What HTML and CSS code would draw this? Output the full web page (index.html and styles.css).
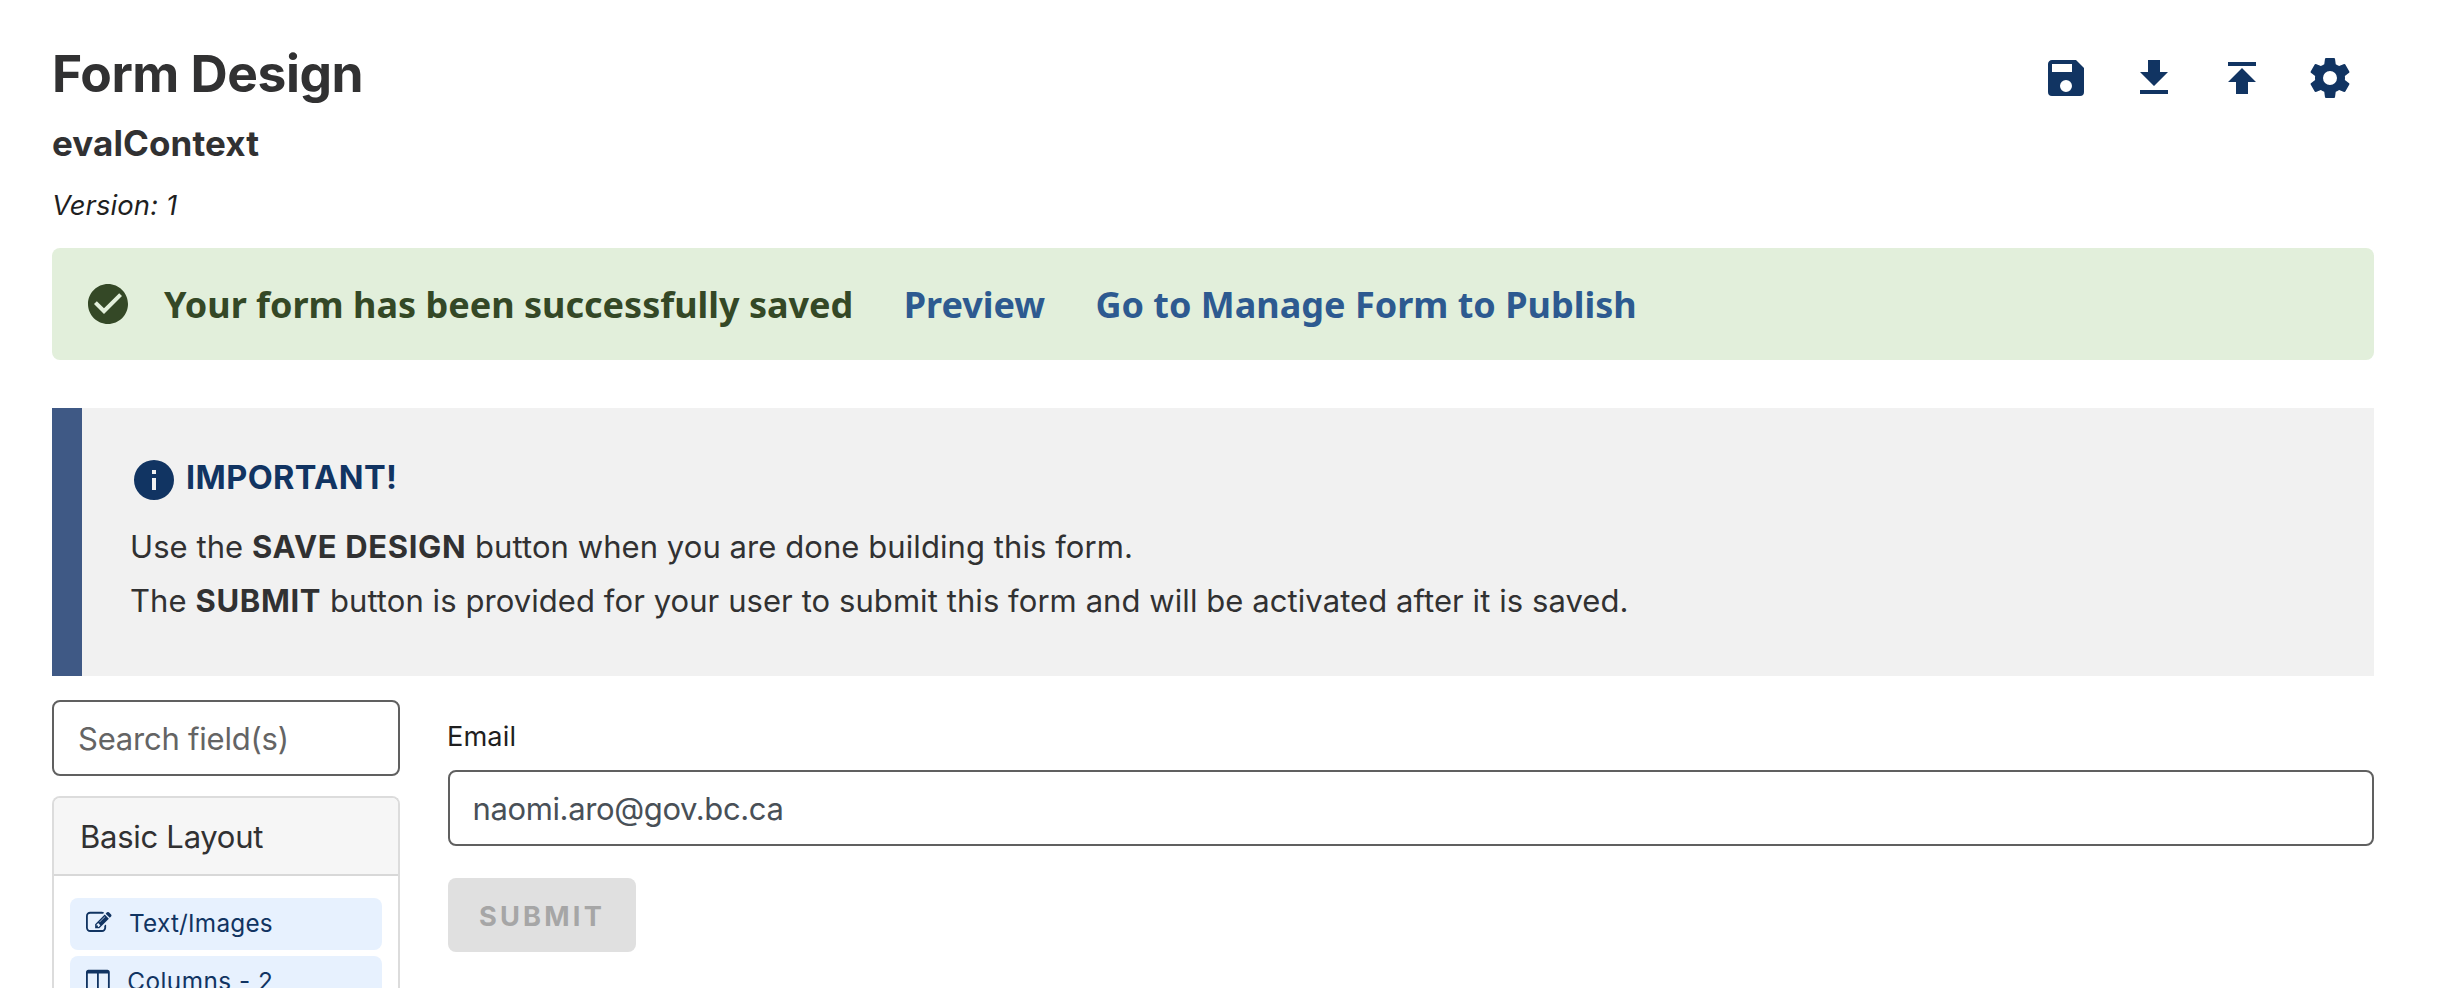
FILE: index.html
```html
<!DOCTYPE html>
<html lang="en">
<head>
<meta charset="utf-8">
<title>Form Design</title>
<link rel="stylesheet" href="styles.css">
</head>
<body>
<header class="header">
  <div class="heading">
    <h1 class="title">Form Design</h1>
    <h2 class="subtitle">evalContext</h2>
    <em class="version">Version: 1</em>
  </div>
  <nav class="actions">
    <svg class="icon" viewBox="0 0 24 24"><path fill-rule="evenodd" d="M15,9H5V5H15M12,19A3,3 0 0,1 9,16A3,3 0 0,1 12,13A3,3 0 0,1 15,16A3,3 0 0,1 12,19M17,3H5C3.89,3 3,3.9 3,5V19A2,2 0 0,0 5,21H19A2,2 0 0,0 21,19V7L17,3Z"/></svg>
    <svg class="icon" viewBox="0 0 24 24"><path d="M5,20H19V18H5M19,9H15V3H9V9H5L12,16L19,9Z"/></svg>
    <svg class="icon" viewBox="0 0 24 24"><path d="M5,4V6H19V4H5M5,14H9V20H15V14H19L12,7L5,14Z"/></svg>
    <svg class="icon" viewBox="0 0 24 24"><path d="M12,15.5A3.5,3.5 0 0,1 8.5,12A3.5,3.5 0 0,1 12,8.5A3.5,3.5 0 0,1 15.5,12A3.5,3.5 0 0,1 12,15.5M19.43,12.97C19.47,12.65 19.5,12.33 19.5,12C19.5,11.67 19.47,11.34 19.43,11L21.54,9.37C21.73,9.22 21.78,8.95 21.66,8.73L19.66,5.27C19.54,5.05 19.27,4.96 19.05,5.05L16.56,6.05C16.04,5.66 15.5,5.32 14.87,5.07L14.5,2.42C14.46,2.18 14.25,2 14,2H10C9.75,2 9.54,2.18 9.5,2.42L9.13,5.07C8.5,5.32 7.96,5.66 7.44,6.05L4.95,5.05C4.73,4.96 4.46,5.05 4.34,5.27L2.34,8.73C2.21,8.95 2.27,9.22 2.46,9.37L4.57,11C4.53,11.34 4.5,11.67 4.5,12C4.5,12.33 4.53,12.65 4.57,12.97L2.46,14.63C2.27,14.78 2.21,15.05 2.34,15.27L4.34,18.73C4.46,18.95 4.73,19.03 4.95,18.95L7.44,17.94C7.96,18.34 8.5,18.68 9.13,18.93L9.5,21.58C9.54,21.82 9.75,22 10,22H14C14.25,22 14.46,21.82 14.5,21.58L14.87,18.93C15.5,18.67 16.04,18.34 16.56,17.94L19.05,18.95C19.27,19.03 19.54,18.95 19.66,18.73L21.66,15.27C21.78,15.05 21.73,14.78 21.54,14.63L19.43,12.97Z"/></svg>
  </nav>
</header>

<div class="alert">
  <svg class="icon alert-icon" viewBox="0 0 24 24"><path d="M12 2C6.5 2 2 6.5 2 12S6.5 22 12 22 22 17.5 22 12 17.5 2 12 2M10 17L5 12L6.41 10.59L10 14.17L17.59 6.58L19 8L10 17Z"/></svg>
  <div class="alert-body">
    <span>Your form has been successfully saved</span>
    <a class="alert-link">Preview</a>
    <a class="alert-link">Go to Manage Form to Publish</a>
  </div>
</div>

<section class="notice">
  <div class="notice-head">
    <svg class="icon" viewBox="0 0 24 24"><path d="M13,9H11V7H13M13,17H11V11H13M12,2A10,10 0 0,0 2,12A10,10 0 0,0 12,22A10,10 0 0,0 22,12A10,10 0 0,0 12,2Z"/></svg>
    <h3 class="notice-title">IMPORTANT!</h3>
  </div>
  <p class="notice-line">Use the <strong>SAVE DESIGN</strong> button when you are done building this form.</p>
  <p class="notice-line">The <strong>SUBMIT</strong> button is provided for your user to submit this form and will be activated after it is saved.</p>
</section>

<main class="builder">
  <aside class="sidebar">
    <div class="field search">Search field(s)</div>
    <div class="card">
      <div class="card-head">Basic Layout</div>
      <div class="card-body">
        <div class="item"><svg class="item-icon" viewBox="0 0 1792 1792"><path d="M888 1184l116-116-152-152-116 116v56h96v96h56zm440-720q-16-16-33 1l-350 350q-17 17-1 33t33-1l350-350q17-17 1-33zm80 594v190q0 119-84.5 203.5t-203.5 84.5h-832q-119 0-203.5-84.5t-84.5-203.5v-832q0-119 84.5-203.5t203.5-84.5h832q63 0 117 25 15 7 18 23 3 17-9 29l-49 49q-14 14-32 8-23-6-45-6h-832q-66 0-113 47t-47 113v832q0 66 47 113t113 47h832q66 0 113-47t47-113v-126q0-13 9-22l64-64q15-15 35-7t20 29zm-96-738l288 288-672 672h-288v-288zm444 132l-92 92-288-288 92-92q28-28 68-28t68 28l152 152q28 28 28 68t-28 68z"/></svg><span>Text/Images</span></div>
        <div class="item item-columns"><svg class="item-icon" viewBox="0 -128 1664 1792"><path d="M160 1408h608v-1152h-640v1120q0 13 9.5 22.5t22.5 9.5zm1376-32v-1120h-640v1152h608q13 0 22.5-9.5t9.5-22.5zm128-1216v1216q0 66-47 113t-113 47h-1344q-66 0-113-47t-47-113v-1216q0-66 47-113t113-47h1344q66 0 113 47t47 113z"/></svg><span>Columns - 2</span></div>
      </div>
    </div>
  </aside>
  <div class="form">
    <label class="label">Email</label>
    <div class="field email">naomi.aro@gov.bc.ca</div>
    <button class="submit" disabled>SUBMIT</button>
  </div>
</main>
</body>
</html>
```
FILE: styles.css
```css
* {
  box-sizing: border-box;
}

body {
  display: flex;
  flex-direction: column;
  margin: 0;
  padding: 43px 64px 0 52px;
  height: 988px;
  overflow: hidden;
  background: #fff;
  color: #313132;
  font: 400 31px/54px Inter, "Liberation Sans", sans-serif;
}

.header {
  display: flex;
  justify-content: space-between;
  align-items: flex-start;
}

.heading {
  display: flex;
  flex-direction: column;
}

.title {
  margin: 0;
  font-size: 51.5px;
  line-height: 60px;
  font-weight: 700;
  letter-spacing: -0.45px;
}

.subtitle {
  margin: 15px 0 17px;
  font-size: 35px;
  line-height: 50px;
  font-weight: 700;
  letter-spacing: 0.1px;
}

.version {
  font-size: 27.4px;
  line-height: 40px;
  letter-spacing: 0.12px;
  color: #1f1f1f;
}

.actions {
  display: flex;
  gap: 40px;
  padding: 11px 20px 0 0;
}

.icon {
  display: block;
  flex: none;
  width: 48px;
  height: 48px;
  fill: #113462;
}

.alert {
  display: flex;
  flex: none;
  align-items: center;
  gap: 32px;
  height: 112px;
  margin-top: 23px;
  padding-left: 32px;
  border-radius: 8px;
  background: #e2efdb;
  color: #344826;
  font: 700 36px/54px "Noto Sans", sans-serif;
}

.alert-icon {
  fill: #344826;
}

.alert-body {
  display: flex;
  gap: 50.3px;
  padding-top: 2px;
}

.alert-link {
  color: #2d5a90;
}

.notice {
  flex: none;
  height: 268px;
  margin-top: 48px;
  padding: 48px;
  border-left: 30px solid #3f5985;
  background: #f1f1f1;
}

.notice-head {
  display: flex;
  gap: 8px;
  height: 48px;
  margin-bottom: 16px;
}

.notice-title {
  margin: 0;
  font-size: 32.5px;
  line-height: 44px;
  font-weight: 700;
  letter-spacing: 0.4px;
  color: #113462;
}

.notice-line {
  margin: 0;
  letter-spacing: 0.07px;
}

.notice-line strong {
  font-weight: 700;
  letter-spacing: 0.66px;
}

.builder {
  display: grid;
  flex: 1;
  min-height: 0;
  grid-template-columns: 348px 1fr;
  grid-template-rows: minmax(0, 1fr);
  gap: 48px;
  margin-top: 24px;
}

.sidebar {
  display: flex;
  flex-direction: column;
  min-height: 0;
}

.field {
  flex: none;
  height: 76px;
  border: 2px solid #606060;
  border-radius: 8px;
  line-height: 74px;
}

.search {
  padding-left: 24px;
  color: #646464;
  letter-spacing: -0.22px;
}

.card {
  flex: 1;
  min-height: 0;
  margin-top: 20px;
  overflow: hidden;
  border: 2px solid #dcdcdc;
  border-bottom: 0;
  border-radius: 8px 8px 0 0;
}

.card-head {
  height: 78px;
  padding-left: 26px;
  border-bottom: 2px solid #d8d8d8;
  background: #f6f6f6;
  line-height: 78px;
  letter-spacing: -0.27px;
}

.card-body {
  display: flex;
  flex-direction: column;
  gap: 6px;
  padding: 22px 16px 0;
}

.item {
  display: flex;
  flex: none;
  align-items: flex-start;
  gap: 17.4px;
  height: 52px;
  padding-left: 16px;
  border-radius: 8px;
  background: #e7f1fe;
  color: #113462;
  font-size: 24.3px;
  line-height: 51px;
  letter-spacing: 0.25px;
}

.item-columns {
  letter-spacing: 0.5px;
}

.item-icon {
  flex: none;
  height: 25.6px;
  margin-top: 12px;
  fill: #113462;
}

.form {
  display: flex;
  flex-direction: column;
  padding-top: 17px;
}

.label {
  margin: 0 0 13px -1px;
  color: #1f1f1f;
  font-size: 27.2px;
  line-height: 40px;
  letter-spacing: 0.1px;
}

.email {
  padding-left: 22.5px;
  color: #495057;
  letter-spacing: -0.37px;
}

.submit {
  align-self: flex-start;
  width: 188px;
  height: 74px;
  margin-top: 32px;
  padding: 3px 0 0 31px;
  border: 0;
  border-radius: 8px;
  background: #e0e0e0;
  color: #a6a6a6;
  font: 700 27.2px/71px Inter, "Liberation Sans", sans-serif;
  letter-spacing: 3.2px;
  text-align: left;
}
```
